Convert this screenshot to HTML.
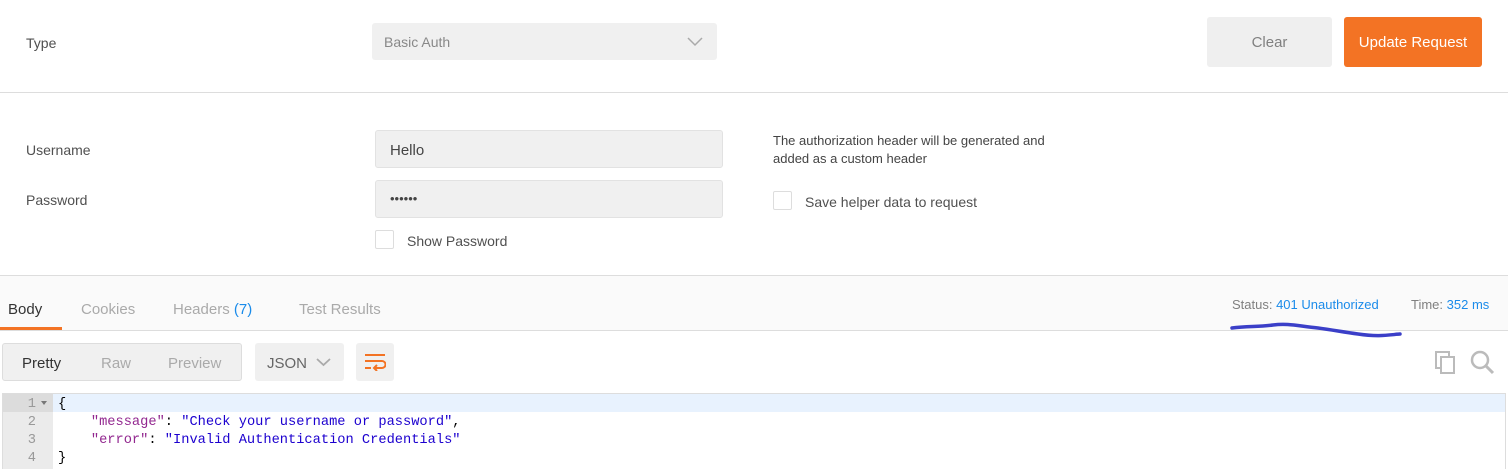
<!DOCTYPE html>
<html><head><style>
*{box-sizing:border-box;margin:0;padding:0}
body{width:1508px;height:469px;background:#fff;font-family:"Liberation Sans",sans-serif;font-size:14px;color:#333;position:relative;overflow:hidden}
.a{position:absolute}
.lbl{color:#505050;font-size:14px}
.inp{background:#f0f0f0;border:1px solid #e2e2e2;border-radius:3px}
.cb{width:19px;height:19px;border:1px solid #ddd;border-radius:2px;background:#fff}
.mono{font-family:"Liberation Mono",monospace;font-size:13.7px}
</style></head><body>
<div class="a lbl" style="left:26px;top:35px">Type</div>
<div class="a inp" style="left:372px;top:23px;width:345px;height:37px;border:none"><span class="a" style="left:12px;top:11px;color:#888">Basic Auth</span>
<svg class="a" style="left:315px;top:14px" width="16" height="10"><path d="M1 1l7 7 7-7" fill="none" stroke="#aaa" stroke-width="1.5"/></svg></div>
<div class="a" style="left:1207px;top:17px;width:125px;height:50px;background:#efefef;border-radius:3px;color:#808080;text-align:center;line-height:52px;font-size:15px">Clear</div>
<div class="a" style="left:1344px;top:17px;width:138px;height:50px;background:#f37324;border-radius:3px;color:#fff;text-align:center;line-height:52px;font-size:15px">Update Request</div>
<div class="a" style="left:0;top:92px;width:1508px;height:1px;background:#ddd"></div>
<div class="a lbl" style="left:26px;top:142px">Username</div>
<div class="a lbl" style="left:26px;top:192px">Password</div>
<div class="a inp" style="left:375px;top:130px;width:348px;height:38px"><span class="a" style="left:14px;top:11px;color:#444;font-size:15px">Hello</span></div>
<div class="a inp" style="left:375px;top:180px;width:348px;height:38px"><span class="a" style="left:14px;top:10px;color:#444;font-size:13px">••••••</span></div>
<div class="a cb" style="left:375px;top:230px"></div>
<div class="a lbl" style="left:407px;top:233px">Show Password</div>
<div class="a" style="left:773px;top:132px;font-size:13px;color:#444;line-height:18px">The authorization header will be generated and<br>added as a custom header</div>
<div class="a cb" style="left:773px;top:191px"></div>
<div class="a lbl" style="left:805px;top:194px">Save helper data to request</div>
<div class="a" style="left:0;top:275px;width:1508px;height:56px;background:#fafafa;border-top:1px solid #ddd;border-bottom:1px solid #ddd"></div>
<div class="a" style="left:8px;top:301px;font-size:15px;color:#333">Body</div>
<div class="a" style="left:81px;top:301px;font-size:15px;color:#aaa">Cookies</div>
<div class="a" style="left:173px;top:301px;font-size:15px;color:#aaa">Headers <span style="color:#1a8bea">(7)</span></div>
<div class="a" style="left:299px;top:301px;font-size:15px;color:#aaa">Test Results</div>
<div class="a" style="left:0;top:327px;width:62px;height:3px;background:#f37324"></div>
<div class="a" style="left:1232px;top:297px;font-size:13px;color:#808080">Status: <span style="color:#1a8bea">401 Unauthorized</span></div>
<div class="a" style="left:1411px;top:297px;font-size:13px;color:#808080">Time: <span style="color:#1a8bea">352 ms</span></div>
<svg class="a" style="left:1228px;top:320px" width="180" height="22"><path d="M4 8 C20 6 30 7 45 5 C60 3 70 6 90 8 C105 10 115 12 130 14 C150 17 160 15 172 14" fill="none" stroke="#3b3fc8" stroke-width="3.5" stroke-linecap="round"/></svg>
<div class="a" style="left:2px;top:343px;width:240px;height:38px;background:#f0f0f0;border:1px solid #ddd;border-radius:3px"></div>
<div class="a" style="left:22px;top:355px;font-size:15px;color:#333">Pretty</div>
<div class="a" style="left:101px;top:355px;font-size:15px;color:#aaa">Raw</div>
<div class="a" style="left:168px;top:355px;font-size:15px;color:#aaa">Preview</div>
<div class="a" style="left:255px;top:343px;width:89px;height:38px;background:#f0f0f0;border-radius:3px"><span class="a" style="left:12px;top:12px;font-size:15px;color:#666">JSON</span>
<svg class="a" style="left:61px;top:15px" width="15" height="9"><path d="M1 1l6.5 6 6.5-6" fill="none" stroke="#aaa" stroke-width="1.8"/></svg></div>
<div class="a" style="left:356px;top:343px;width:38px;height:38px;background:#f0f0f0;border-radius:3px">
<svg class="a" style="left:8px;top:10px" width="22" height="18"><path d="M1 2h20M1 8h17a3.5 3.5 0 0 1 0 7h-7M1 15h6" fill="none" stroke="#f37324" stroke-width="2"/><path d="M13 12l-3 3 3 3" fill="none" stroke="#f37324" stroke-width="2"/></svg></div>
<svg class="a" style="left:1434px;top:350px" width="24" height="24"><rect x="2" y="2" width="13" height="16" fill="none" stroke="#bbb" stroke-width="2"/><rect x="7" y="7" width="13" height="16" fill="#fff" stroke="#bbb" stroke-width="2"/></svg>
<svg class="a" style="left:1470px;top:350px" width="26" height="26"><circle cx="10" cy="10" r="8" fill="none" stroke="#bbb" stroke-width="2.5"/><path d="M16 16l7 7" stroke="#bbb" stroke-width="3"/></svg>
<div class="a" style="left:2px;top:393px;width:1504px;height:76px;border:1px solid #ddd;border-bottom:none"></div>
<div class="a" style="left:3px;top:394px;width:50px;height:75px;background:#ebebeb"></div>
<div class="a" style="left:53px;top:394px;width:1452px;height:18px;background:#e8f2fe"></div>
<div class="a" style="left:3px;top:394px;width:50px;height:18px;background:#dcdcdc"></div>
<div class="a mono" style="left:22px;top:396px;color:#999;line-height:18px;text-align:right;width:14px">1<br>2<br>3<br>4</div>
<div class="a" style="left:41px;top:401px;width:0;height:0;border-left:3px solid transparent;border-right:3px solid transparent;border-top:4px solid #777"></div>
<div class="a mono" style="left:58px;top:396px;line-height:18px;color:#000;white-space:pre">{
    <span style="color:#92278f">"message"</span>: <span style="color:#1c00cf">"Check your username or password"</span>,
    <span style="color:#92278f">"error"</span>: <span style="color:#1c00cf">"Invalid Authentication Credentials"</span>
}</div>
</body></html>
